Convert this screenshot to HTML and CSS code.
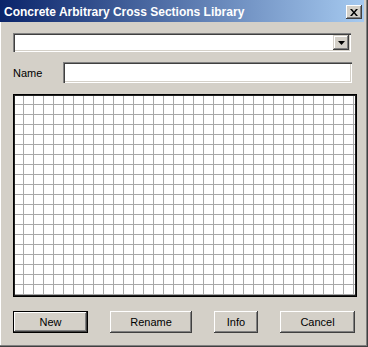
FILE: index.html
```html
<!DOCTYPE html>
<html>
<head>
<meta charset="utf-8">
<link rel="stylesheet" href="styles.css">
</head>
<body>
<div class="window">
  <div class="titlebar">
    <span class="title">Concrete Arbitrary Cross Sections Library</span>
    <span class="close">
      <svg width="8" height="7" viewBox="0 0 8 7"><path d="M0 0h2l2 2.5L6 0h2L5 3.5 8 7H6L4 4.5 2 7H0l3-3.5z" fill="#000"/></svg>
    </span>
  </div>
  <div class="content">
    <div class="combo">
      <div class="combo-field"></div>
      <div class="combo-btn">
        <svg width="7" height="4" viewBox="0 0 7 4"><path d="M0 0h7L3.5 4z" fill="#000"/></svg>
      </div>
    </div>
    <div class="name-row">
      <span class="label">Name</span>
      <div class="field"></div>
    </div>
    <div class="grid"></div>
    <div class="buttons">
      <button class="btn btn-default btn-new">New</button>
      <button class="btn btn-rename">Rename</button>
      <button class="btn btn-info">Info</button>
      <button class="btn btn-cancel">Cancel</button>
    </div>
  </div>
</div>
</body>
</html>
```

FILE: styles.css
```css
html, body {
  margin: 0;
  padding: 0;
  background: #d4d0c8;
}

.window {
  width: 368px;
  height: 347px;
  box-sizing: border-box;
  padding: 0 4px 4px 0;
  background: #d4d0c8;
  box-shadow: inset -1px -1px 0 #404040, inset -2px -2px 0 #808080, inset 1px 0 0 #ffffff;
  font-family: "Liberation Sans", Arial, sans-serif;
  font-size: 11px;
  color: #000;
}

.titlebar {
  height: 22px;
  display: flex;
  align-items: center;
  justify-content: space-between;
  padding: 0 2px 0 4px;
  background: linear-gradient(to right, #0a246a, #a6caf0);
}

.title {
  color: #fff;
  font-weight: bold;
  font-size: 12px;
  padding-top: 2px;
}

.close {
  width: 16px;
  height: 14px;
  box-sizing: border-box;
  background: #d4d0c8;
  display: flex;
  align-items: center;
  justify-content: center;
  box-shadow: inset -1px -1px 0 #404040, inset 1px 1px 0 #ffffff, inset -2px -2px 0 #808080;
  margin-top: 2px;
}

.content {
  padding: 11px 7px 0 13px;
}

.combo {
  height: 19px;
  margin-right: 6px;
  box-sizing: border-box;
  background: #fff;
  display: flex;
  justify-content: flex-end;
  align-items: center;
  padding: 2px;
  box-shadow: inset 1px 1px 0 #808080, inset 2px 2px 0 #404040, inset -1px -1px 0 #ffffff, inset -2px -2px 0 #d4d0c8;
}

.combo-field {
  flex: 1;
}

.combo-btn {
  width: 16px;
  height: 15px;
  box-sizing: border-box;
  background: #d4d0c8;
  display: flex;
  align-items: center;
  justify-content: center;
  box-shadow: inset -1px -1px 0 #404040, inset 1px 1px 0 #d4d0c8, inset -2px -2px 0 #808080, inset 2px 2px 0 #ffffff;
}

.name-row {
  display: flex;
  align-items: center;
  margin-top: 10px;
  margin-right: 5px;
}

.label {
  width: 50px;
  font-size: 11px;
}

.field {
  flex: 1;
  height: 21px;
  background: #fff;
  box-shadow: inset 1px 1px 0 #808080, inset 2px 2px 0 #404040, inset -1px -1px 0 #ffffff, inset -2px -2px 0 #d4d0c8;
}

.grid {
  margin-top: 11px;
  height: 203px;
  box-sizing: border-box;
  border: 1px solid #000;
  box-shadow: inset 1px 1px 0 #202020, inset -1px -1px 0 #202020;
  background-color: #fff;
  background-image:
    linear-gradient(to right, #a8a8a8 1px, transparent 1px),
    linear-gradient(to bottom, #a8a8a8 1px, transparent 1px);
  background-size: 10px 10px;
  background-position: -1px -1px;
}

.buttons {
  display: flex;
  gap: 22px;
  margin-top: 14px;
}

.btn {
  height: 22px;
  box-sizing: border-box;
  border: none;
  padding: 0;
  background: #d4d0c8;
  font-family: "Liberation Sans", Arial, sans-serif;
  font-size: 11px;
  color: #000;
  box-shadow: inset -1px -1px 0 #404040, inset 1px 1px 0 #ffffff, inset -2px -2px 0 #808080;
}

.btn-default {
  border: 1px solid #000;
  box-shadow: inset -1px -1px 0 #404040, inset 1px 1px 0 #ffffff, inset -2px -2px 0 #808080;
}

.btn-new { width: 75px; }
.btn-rename { width: 82px; }
.btn-info { width: 44px; }
.btn-cancel { width: 75px; }
```
